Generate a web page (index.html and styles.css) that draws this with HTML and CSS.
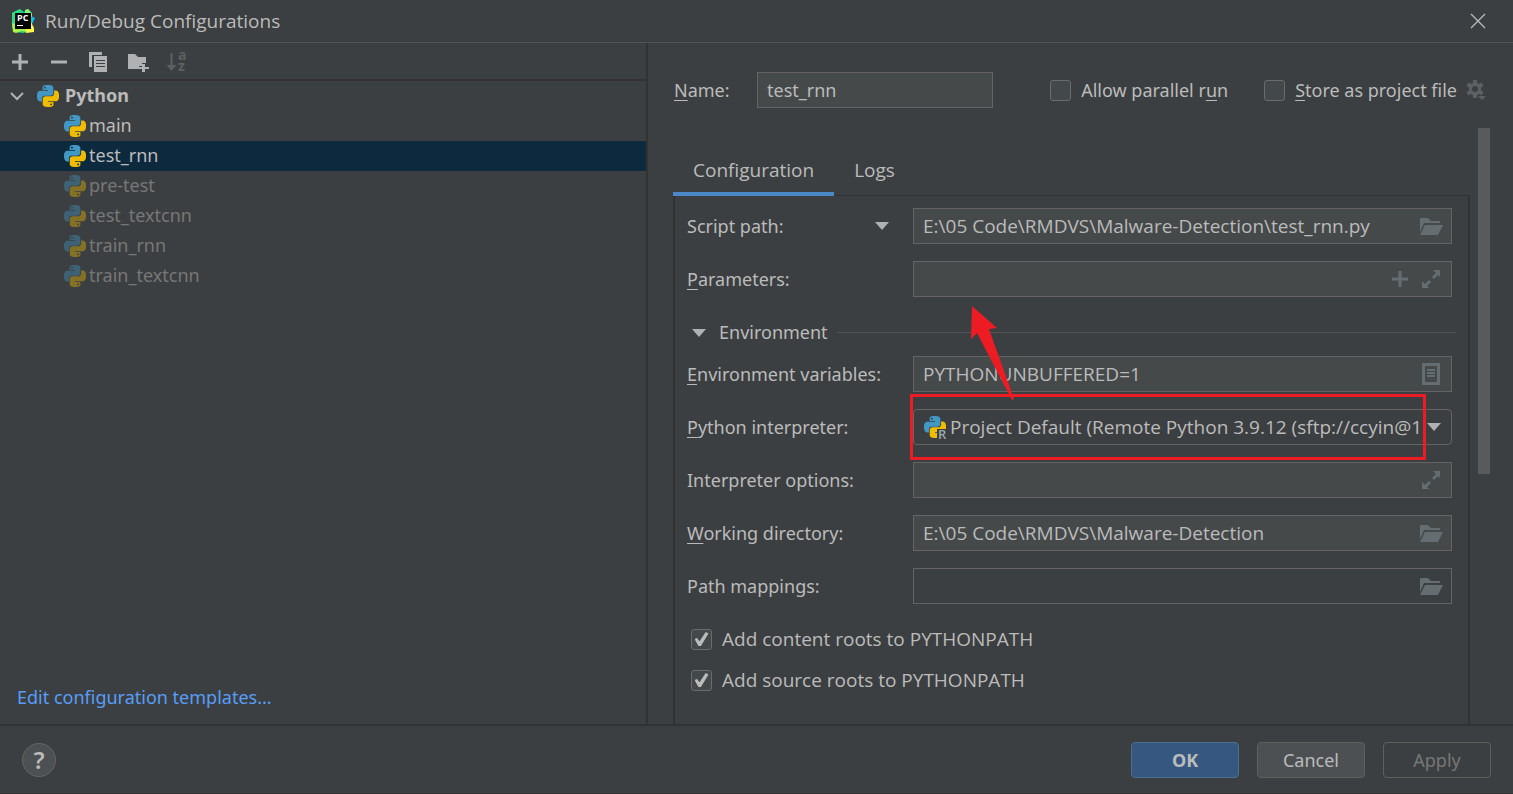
FILE: index.html
```html
<!DOCTYPE html>
<html lang="en">
<head>
<meta charset="utf-8">
<title>Run/Debug Configurations</title>
<link rel="stylesheet" href="styles.css">
</head>
<body>
<svg class="symbols" aria-hidden="true">
  <symbol id="python" viewBox="0 0 24 24">
    <path class="py-top" d="M14.25.18l.9.2.73.26.59.3.45.32.34.34.25.34.16.33.1.3.04.26.02.2-.01.13V8.5l-.05.63-.13.55-.21.46-.26.38-.3.31-.33.25-.35.19-.35.14-.33.1-.3.07-.26.04-.21.02H8.77l-.69.05-.59.14-.5.22-.41.27-.33.32-.27.35-.2.36-.15.37-.1.35-.07.32-.04.27-.02.21v3.06H3.17l-.21-.03-.28-.07-.32-.12-.35-.18-.36-.26-.36-.36-.35-.46-.32-.59-.28-.73-.21-.88-.14-1.05-.05-1.23.06-1.22.16-1.04.24-.87.32-.71.36-.57.4-.44.42-.33.42-.24.4-.16.36-.1.32-.05.24-.01h.16l.06.01h8.16v-.83H6.18l-.01-2.75-.02-.37.05-.34.11-.31.17-.28.25-.26.31-.23.38-.2.44-.18.51-.15.58-.12.64-.1.71-.06.77-.04.84-.02 1.27.05zm-6.3 1.98l-.23.33-.08.41.08.41.23.34.33.22.41.09.41-.09.33-.22.23-.34.08-.41-.08-.41-.23-.33-.33-.22-.41-.09-.41.09z"/>
    <path class="py-bottom" d="M21.1 6.11l.28.06.32.12.35.18.36.27.36.35.35.47.32.59.28.73.21.88.14 1.04.05 1.23-.06 1.23-.16 1.04-.24.86-.32.71-.36.57-.4.45-.42.33-.42.24-.4.16-.36.09-.32.05-.24.02-.16-.01h-8.22v.82h5.84l.01 2.76.02.36-.05.34-.11.31-.17.29-.25.25-.31.24-.38.2-.44.17-.51.15-.58.13-.64.09-.71.07-.77.04-.84.01-1.27-.04-1.07-.14-.9-.2-.73-.25-.59-.3-.45-.33-.34-.34-.25-.34-.16-.33-.1-.3-.04-.25-.02-.2.01-.13v-5.34l.05-.64.13-.54.21-.46.26-.38.3-.32.33-.24.35-.2.35-.14.33-.1.3-.06.26-.04.21-.02.13-.01h5.84l.69-.05.59-.14.5-.21.41-.28.33-.32.27-.35.2-.36.15-.36.1-.35.07-.32.04-.28.02-.21V6.07h2.09l.14.01zm-6.47 14.25l-.23.33-.08.41.08.41.23.33.33.23.41.08.41-.08.33-.23.23-.33.08-.41-.08-.41-.23-.33-.33-.23-.41-.08-.41.08z"/>
  </symbol>
  <symbol id="folder" viewBox="0 0 24 18">
    <path d="M1 1h8l3 3h9v2H5L1 15z"/>
    <path d="M6 8h18l-5 10H1z"/>
  </symbol>
  <symbol id="expand" viewBox="0 0 18 18">
    <path d="M11 0h7v7l-2-2-4 4-2-2 4-4zM0 11l3 3 4-4 2 2-4 4 2 2H0z"/>
  </symbol>
  <symbol id="plus" viewBox="0 0 16 16">
    <path d="M6.500 0h3v6.500H16v3H9.500V16h-3V9.500H0v-3h6.500z"/>
  </symbol>
  <symbol id="caret" viewBox="0 0 14 8">
    <path d="M0 0h14L7 8z"/>
  </symbol>
</svg>

<div class="dialog">
  <header class="titlebar">
    <svg class="app-icon" viewBox="0 0 24 24" aria-hidden="true">
      <path fill="#21d789" d="M1 4l8-4 4 3 4-3 4 4v13l-8 7-9-1-3-5z"/>
      <path fill="#2fe07a" d="M1 4l8-4-4 13-3 5z"/>
      <path fill="#07c3f2" d="M20 7l4 2-3 6z"/>
      <path fill="#8df27a" d="M14 1l3-1 4 5v3l-7-4z"/>
      <path fill="#fcf84a" d="M20 13l3 6v4l-8 1-2-4z"/>
      <path fill="#a8f04c" d="M1 14l13 5 2 4-5-1-6 2-3-1z"/>
      <path fill="#000" d="M4 4h16v16H4z"/>
      <text class="app-letters" x="6" y="12">PC</text>
      <path fill="#fff" d="M6 16h6v1H6z"/>
    </svg>
    <h1 class="title">Run/Debug Configurations</h1>
    <button class="icon-button close" aria-label="Close">
      <svg width="16" height="16" viewBox="0 0 16 16"><path d="M1 1l14 14M15 1L1 15" stroke="currentColor" stroke-width="1.300"/></svg>
    </button>
  </header>

  <main class="body">
    <section class="sidebar">
      <div class="toolbar">
        <button class="icon-button" aria-label="Add"><svg width="16" height="16"><use href="#plus"/></svg></button>
        <button class="icon-button" aria-label="Remove"><svg width="16" height="16" viewBox="0 0 16 16"><path d="M0 6.500h16v3H0z"/></svg></button>
        <button class="icon-button" aria-label="Copy">
          <svg width="20" height="20" viewBox="0 0 20 20"><path d="M1 0h13v3H4v12H1z"/><path fill-rule="evenodd" d="M6 4h13v16H6zM8 8v1h9V8zM8 11v1h9v-1zM8 14v1h9v-1z"/></svg>
        </button>
        <button class="icon-button" aria-label="New folder">
          <svg width="22" height="20" viewBox="0 0 22 20"><path d="M2 2h7l3 3h8v6h-4v3h-3v3H2z"/><path d="M16 12h3v3h4v2h-4v3h-3v-3h-3v-2h3z"/></svg>
        </button>
        <button class="icon-button" aria-label="Sort" disabled>
          <svg width="20" height="20" viewBox="0 0 20 20"><path d="M4.500 1h2v12h4L5.500 19l-5-6h4z"/><text class="sort-letters"><tspan x="12" y="8">a</tspan><tspan x="12" y="19">z</tspan></text></svg>
        </button>
      </div>
      <ul class="tree">
        <li class="row group">
          <svg class="chevron" viewBox="0 0 14 8" aria-hidden="true"><path d="M1 1l6 6 6-6" fill="none" stroke="currentColor" stroke-width="2"/></svg>
          <svg class="py"><use href="#python"/></svg><span>Python</span>
        </li>
        <li class="row"><svg class="py"><use href="#python"/></svg><span>main</span></li>
        <li class="row selected"><svg class="py"><use href="#python"/></svg><span>test_rnn</span></li>
        <li class="row temp"><svg class="py"><use href="#python"/></svg><span>pre-test</span></li>
        <li class="row temp"><svg class="py"><use href="#python"/></svg><span>test_textcnn</span></li>
        <li class="row temp"><svg class="py"><use href="#python"/></svg><span>train_rnn</span></li>
        <li class="row temp"><svg class="py"><use href="#python"/></svg><span>train_textcnn</span></li>
      </ul>
      <a class="templates" href="#templates">Edit configuration templates...</a>
    </section>

    <section class="editor">
      <div class="name-row">
        <label class="name-label" for="name"><u>N</u>ame:</label>
        <span class="field name-field"><input id="name" type="text" value="test_rnn"></span>
        <div class="name-options">
          <label class="check"><input type="checkbox"><span>Allow parallel r<u>u</u>n</span></label>
          <label class="check"><input type="checkbox"><span><u>S</u>tore as project file</span></label>
          <button class="icon-button gear" aria-label="Storage options" disabled>
            <svg width="22" height="22" viewBox="0 0 22 22"><path fill-rule="evenodd" d="M8 1h4v3l2 1 2.500-1.500 2 3.500L16 8.500v3l2.500 1.500-2 3.500L14 15l-2 1v3H8v-3l-2-1-2.500 1.500-2-3.500L4 11.500v-3L1.500 7l2-3.500L6 5l2-1zM10 7a3 3 0 1 0 0 6 3 3 0 1 0 0-6z"/><path class="gear-gap" d="M12 16h10v6h-7z"/><path d="M13 17h8l-4 4z"/></svg>
          </button>
        </div>
      </div>

      <div class="scroll-area">
        <div class="content">
          <div class="tabs" role="tablist">
            <button class="tab active" role="tab" aria-selected="true">Configuration</button>
            <button class="tab" role="tab" aria-selected="false">Logs</button>
          </div>
          <div class="panel">
            <div class="form-row">
              <div class="label-cell">
                <label for="script">Script path:</label>
                <button class="icon-button target-kind" aria-label="Target kind"><svg class="caret"><use href="#caret"/></svg></button>
              </div>
              <div class="field">
                <input id="script" type="text" value="E:\05 Code\RMDVS\Malware-Detection\test_rnn.py">
                <button class="icon-button" aria-label="Browse script"><svg class="folder"><use href="#folder"/></svg></button>
              </div>
            </div>
            <div class="form-row">
              <label for="params"><u>P</u>arameters:</label>
              <div class="field">
                <input id="params" type="text">
                <button class="icon-button" aria-label="Insert macro"><svg width="16" height="16"><use href="#plus"/></svg></button>
                <button class="icon-button" aria-label="Expand parameters"><svg class="expand"><use href="#expand"/></svg></button>
              </div>
            </div>
            <div class="section-head">
              <button class="section-toggle" aria-expanded="true"><svg class="caret"><use href="#caret"/></svg>Environment</button>
              <span class="rule"></span>
            </div>
            <div class="form-row">
              <label for="env"><u>E</u>nvironment variables:</label>
              <div class="field">
                <input id="env" type="text" value="PYTHONUNBUFFERED=1">
                <button class="icon-button" aria-label="Edit variables">
                  <svg class="list" viewBox="0 0 18 22"><path fill-rule="evenodd" d="M0 0h18v22H0zM3 3v16h12V3z"/><path d="M5 6h8v2H5zM5 9h8v2H5zM5 12h8v2H5z"/></svg>
                </button>
              </div>
            </div>
            <div class="form-row">
              <label for="interpreter"><u>P</u>ython interpreter:</label>
              <div class="field combo">
                <svg class="remote" viewBox="0 0 24 24" aria-hidden="true"><use href="#python" x="1" y="1" width="22" height="22"/><path class="badge-gap" d="M14 14h10v10H14z"/><text class="badge" x="15" y="24">R</text></svg>
                <select id="interpreter"><option>Project Default (Remote Python 3.9.12 (sftp://ccyin@1</option></select>
                <svg class="caret" aria-hidden="true"><use href="#caret"/></svg>
                <span class="highlight"></span>
                <svg class="pointer" viewBox="0 0 46 96" aria-hidden="true"><path d="M3 1l25 22-8 1 25 70-2 1L8 28l-6 6z"/></svg>
              </div>
            </div>
            <div class="form-row">
              <label for="options">Interpreter options:</label>
              <div class="field">
                <input id="options" type="text">
                <button class="icon-button" aria-label="Expand options"><svg class="expand"><use href="#expand"/></svg></button>
              </div>
            </div>
            <div class="form-row">
              <label for="workdir"><u>W</u>orking directory:</label>
              <div class="field">
                <input id="workdir" type="text" value="E:\05 Code\RMDVS\Malware-Detection">
                <button class="icon-button" aria-label="Browse directory"><svg class="folder"><use href="#folder"/></svg></button>
              </div>
            </div>
            <div class="form-row">
              <label for="mappings">Path mappings:</label>
              <div class="field readonly">
                <input id="mappings" type="text" readonly>
                <button class="icon-button" aria-label="Edit mappings"><svg class="folder"><use href="#folder"/></svg></button>
              </div>
            </div>
            <div class="checks">
              <label class="check"><input type="checkbox" checked><span>Add content roots to PYTHONPATH</span></label>
              <label class="check"><input type="checkbox" checked><span>Add source roots to PYTHONPATH</span></label>
            </div>
          </div>
        </div>
        <div class="scrollbar"><div class="thumb"></div></div>
      </div>
    </section>
  </main>

  <footer class="footer">
    <button class="help" aria-label="Help">?</button>
    <button class="button primary">OK</button>
    <button class="button">Cancel</button>
    <button class="button" disabled>Apply</button>
  </footer>
</div>
</body>
</html>
```
FILE: styles.css
```css
:root {
  --bg: #3c3f41;
  --field: #45494a;
  --border: #646464;
  --line: #323232;
  --text: #bbbbbb;
  --icon: #afb1b3;
  --muted: #646d71;
  --wide: 19px/26px "Open Sans", "Noto Sans", sans-serif;
}

* { box-sizing: border-box; }

body {
  margin: 0;
  background: var(--bg);
  color: var(--text);
  font: 18px/26px "Noto Sans", "Open Sans", sans-serif;
}

button, input, select { font: inherit; color: inherit; }
button { border: 0; padding: 0; background: none; }
svg { display: block; flex: none; fill: currentColor; overflow: visible; }
label { white-space: nowrap; }
u { text-decoration-thickness: 1px; text-underline-offset: 3px; }

.symbols { position: absolute; width: 0; height: 0; }

.dialog {
  display: flex;
  flex-direction: column;
  min-height: 100vh;
  border-bottom: 1px solid var(--line);
}

.titlebar {
  display: flex;
  align-items: center;
  gap: 10px;
  height: 43px;
  padding: 0 27px 0 11px;
  border-bottom: 1px solid #515354;
}
.app-icon { width: 24px; height: 24px; }
.app-letters { font: bold 9px "Open Sans", sans-serif; fill: #fff; }
.title { margin: 0; font: var(--wide); }
.close { margin-left: auto; }

.icon-button {
  display: flex;
  flex: none;
  align-items: center;
  justify-content: center;
}

.body {
  display: grid;
  grid-template-columns: 648fr 865fr;
  flex: 1;
}

.sidebar {
  display: flex;
  flex-direction: column;
  border-right: 2px solid var(--line);
}
.toolbar {
  display: flex;
  align-items: center;
  gap: 15px;
  height: 38px;
  padding: 1px 0 0 8px;
  border-bottom: 2px solid var(--line);
  color: var(--icon);
}
.toolbar .icon-button { width: 24px; height: 24px; }
.toolbar .icon-button:disabled { color: #5d6062; }
.sort-letters { font: bold 14px "Open Sans", sans-serif; }

.tree { flex: 1; margin: 0; padding: 0; list-style: none; }
.row {
  display: flex;
  align-items: center;
  gap: 3px;
  height: 30px;
  padding-left: 64px;
}
.row span { padding-bottom: 2px; }
.group { gap: 6px; padding-left: 10px; font-weight: 700; }
.chevron { width: 14px; height: 8px; margin-right: 7px; color: var(--icon); }
.selected { background: #0d293e; }
.temp { color: #777777; }
.temp .py { opacity: .4; }
.py { width: 22px; height: 22px; }
.py-top { fill: #4198c4; }
.py-bottom { fill: #f0bc00; }
.templates {
  align-self: flex-start;
  padding: 0 17px 14px;
  color: #589df6;
  text-decoration: none;
}

.editor { display: flex; flex-direction: column; min-width: 0; }
.name-row {
  display: flex;
  align-items: center;
  padding: 29px 26px 20px;
}
.name-label { width: 83px; }
.name-field { width: 236px; }
.name-options { display: flex; align-items: center; margin-left: auto; }
.name-options .check { margin-right: 36px; }
.name-options .check + .check { margin-right: 8px; }
.gear { color: #5d6062; }
.gear-gap { fill: var(--bg); }

.scroll-area { display: flex; flex: 1; padding: 0 23px 0 25px; }
.content { display: flex; flex: 1; flex-direction: column; min-width: 0; }
.tabs { position: relative; z-index: 1; display: flex; height: 68px; padding-top: 20px; }
.tab { padding: 0 20px; border-bottom: 4px solid transparent; font: var(--wide); }
.active { border-color: #4a88c7; }
.panel {
  display: flex;
  flex: 1;
  flex-direction: column;
  gap: 17px;
  margin-top: -1px;
  padding: 12px 16px 31px 12px;
  border: solid var(--line);
  border-width: 1px 2px 0;
}

.form-row {
  display: grid;
  grid-template-columns: 226px minmax(0, 1fr);
  align-items: center;
}
.label-cell { display: flex; align-items: center; justify-content: space-between; }
.target-kind { margin-right: 24px; }
.caret { width: 14px; height: 8px; color: var(--icon); }

.field {
  display: flex;
  align-items: center;
  gap: 11px;
  height: 36px;
  padding: 0 10px 0 9px;
  border: 1px solid var(--border);
  background: var(--field);
}
.field input {
  flex: 1;
  min-width: 0;
  padding: 0;
  border: 0;
  outline: 0;
  background: none;
}
.form-row input { font: var(--wide); }
.field .icon-button { width: 20px; color: var(--muted); }
.readonly { background: none; }
.folder { width: 24px; height: 18px; }
.expand { width: 18px; height: 18px; }
.list { width: 18px; height: 22px; }

.combo {
  position: relative;
  gap: 3px;
  border-radius: 4px;
  background: none;
}
.combo select {
  flex: 1;
  min-width: 0;
  padding: 0;
  border: 0;
  outline: 0;
  appearance: none;
  background: none;
  font: var(--wide);
}
.remote { width: 24px; height: 24px; }
.badge-gap { fill: var(--bg); }
.badge { font: 600 13px "Open Sans", sans-serif; fill: #9aa7b0; }
.highlight {
  position: absolute;
  inset: -16px 25px -16px -4px;
  border: 3px solid #ed1c24;
  pointer-events: none;
}
.pointer {
  position: absolute;
  bottom: 43px;
  left: 55px;
  width: 46px;
  height: 96px;
  fill: #ed1c24;
  pointer-events: none;
}

.section-head { display: flex; align-items: center; gap: 9px; margin: 6px -4px -6px 0; }
.section-toggle { display: flex; align-items: center; gap: 13px; padding-left: 5px; line-height: 25px; }
.rule { flex: 1; height: 1px; background: #515354; }

.checks { display: flex; flex-direction: column; gap: 15px; padding: 5px 4px 0; font: var(--wide); }
.check { display: flex; align-items: center; gap: 10px; }
.check input {
  display: grid;
  place-items: center;
  width: 21px;
  height: 21px;
  margin: 0;
  appearance: none;
  border: 1px solid #6b6b6b;
  border-radius: 3px;
  background: #43494a;
}
.check input:checked::before {
  content: "";
  width: 14px;
  height: 14px;
  background: var(--text);
  clip-path: polygon(0 50%, 18% 42%, 36% 66%, 80% 0, 100% 10%, 46% 100%, 28% 100%);
}

.scrollbar { width: 12px; margin-left: 8px; }
.thumb { height: 58%; background: #595a5c; }

.footer {
  display: flex;
  align-items: center;
  gap: 18px;
  height: 69px;
  padding: 1px 22px 0;
  border-top: 2px solid var(--line);
}
.button {
  width: 108px;
  height: 36px;
  border: 1px solid #5e6060;
  border-radius: 4px;
  background: #4c5052;
}
.primary { border-color: #4c708c; background: #365880; font-weight: 700; }
.button:disabled { background: none; color: #777777; }
.help {
  width: 34px;
  height: 34px;
  margin-right: auto;
  border: 1px solid #646464;
  border-radius: 50%;
  background: #4c5052;
  font-size: 24px;
  font-weight: 600;
}
```
